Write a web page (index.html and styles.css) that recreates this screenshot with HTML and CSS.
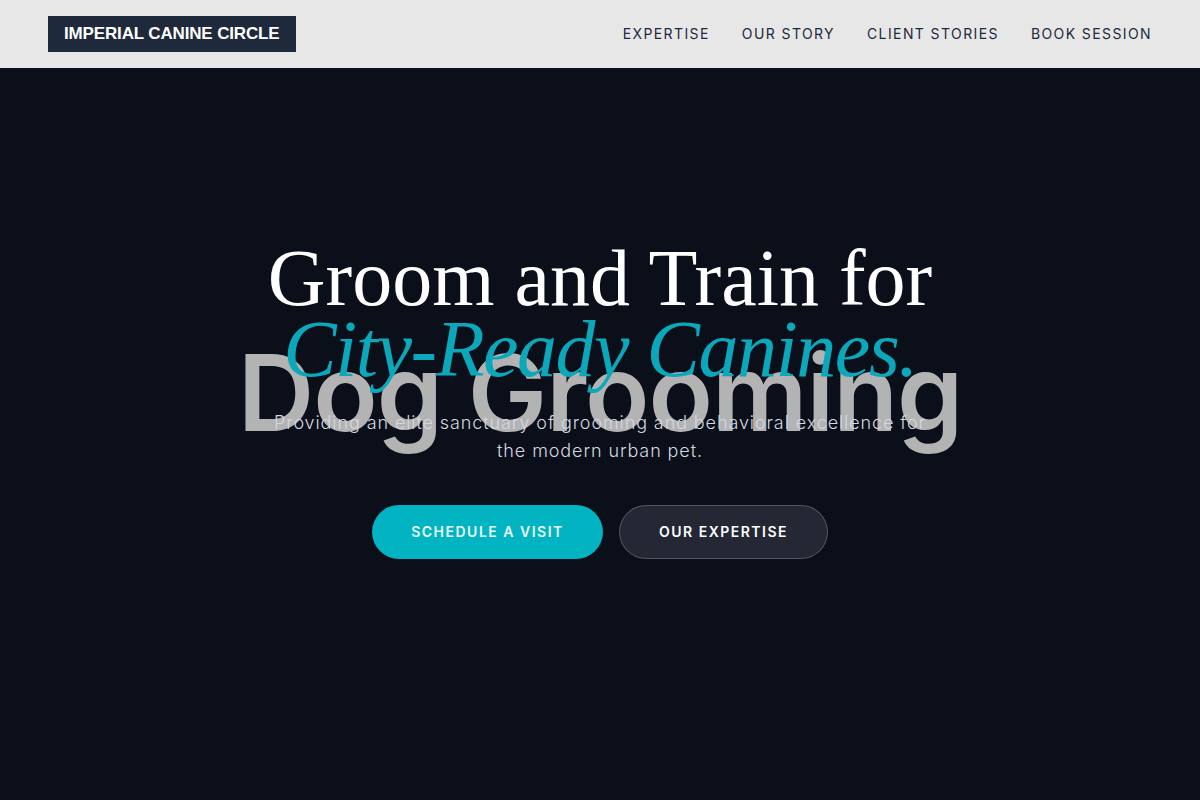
FILE: index.html
```html
<!DOCTYPE html>
<html lang="en">
<head>
<meta charset="utf-8">
<title>Imperial Canine Circle</title>
<link rel="stylesheet" href="styles.css">
</head>
<body>
<header class="site-header">
  <a class="logo" href="#">IMPERIAL CANINE CIRCLE</a>
  <nav class="nav">
    <a href="#">EXPERTISE</a>
    <a href="#">OUR STORY</a>
    <a href="#">CLIENT STORIES</a>
    <a href="#">BOOK SESSION</a>
  </nav>
</header>
<main class="hero">
  <div class="hero-bg">Dog Grooming</div>
  <div class="hero-content">
    <h1 class="title">Groom and Train for<br><em class="accent">City-Ready Canines.</em></h1>
    <p class="lead">Providing an elite sanctuary of grooming and behavioral excellence for the modern urban pet.</p>
    <div class="actions">
      <a class="btn btn-primary" href="#">SCHEDULE A VISIT</a>
      <a class="btn btn-ghost" href="#">OUR EXPERTISE</a>
    </div>
  </div>
</main>
</body>
</html>
```
FILE: styles.css
```css
* { box-sizing: border-box; }
html, body { margin: 0; padding: 0; }
body {
  font-family: Inter, "Noto Sans", sans-serif;
  background: #0a0f1a;
  height: 800px;
  overflow: hidden;
}
a { text-decoration: none; }

.site-header {
  height: 69px;
  background: #e7e7e7;
  border-bottom: 1px solid #0b1220;
  display: flex;
  align-items: center;
  justify-content: space-between;
  padding: 0 48px;
}
.logo {
  background: #1e293b;
  color: #ffffff;
  font-family: "Liberation Sans", Arial, sans-serif;
  font-weight: 700;
  font-size: 17px;
  letter-spacing: -0.15px;
  line-height: 36px;
  height: 36px;
  padding: 0 16px;
  margin-top: -1px;
}
.nav {
  display: flex;
  gap: 32px;
  margin-top: -2px;
}
.nav a {
  color: #1e293b;
  font-size: 14px;
  letter-spacing: 1.4px;
  font-weight: 400;
}

.hero {
  position: relative;
  height: 731px;
  background: #0a0f1a;
  display: flex;
  justify-content: center;
  overflow: hidden;
}
.hero-bg {
  position: absolute;
  left: 0;
  right: 0;
  top: 271px;
  text-align: center;
  font-family: Inter, sans-serif;
  font-weight: 600;
  font-size: 106px;
  line-height: 1;
  color: #b3b3b3;
  letter-spacing: -1px;
  white-space: nowrap;
}
.hero-content {
  position: relative;
  padding-top: 174px;
  text-align: center;
  width: 760px;
}
.title {
  margin: 0;
  font-family: "Liberation Serif", "Times New Roman", serif;
  font-weight: 400;
  font-size: 80px;
  line-height: 71px;
  color: #ffffff;
}
.accent {
  color: #0aa8ba;
  font-style: italic;
  letter-spacing: -1.5px;
}
.lead {
  margin: 24px auto 0;
  max-width: 662px;
  font-size: 18px;
  font-weight: 300;
  line-height: 28px;
  color: #d3d8e0;
  letter-spacing: 0.9px;
}
.actions {
  margin-top: 40px;
  display: flex;
  justify-content: center;
  gap: 16px;
}
.btn {
  display: inline-flex;
  align-items: center;
  justify-content: center;
  height: 54px;
  padding-bottom: 2px;
  border-radius: 27px;
  font-size: 14px;
  font-weight: 600;
  letter-spacing: 1.5px;
  color: #ffffff;
}
.btn-primary {
  width: 231px;
  background: #02b4c2;
  color: #e8fbfd;
}
.btn-ghost {
  width: 209px;
  background: #242835;
  border: 1px solid rgba(255,255,255,0.22);
}
```
